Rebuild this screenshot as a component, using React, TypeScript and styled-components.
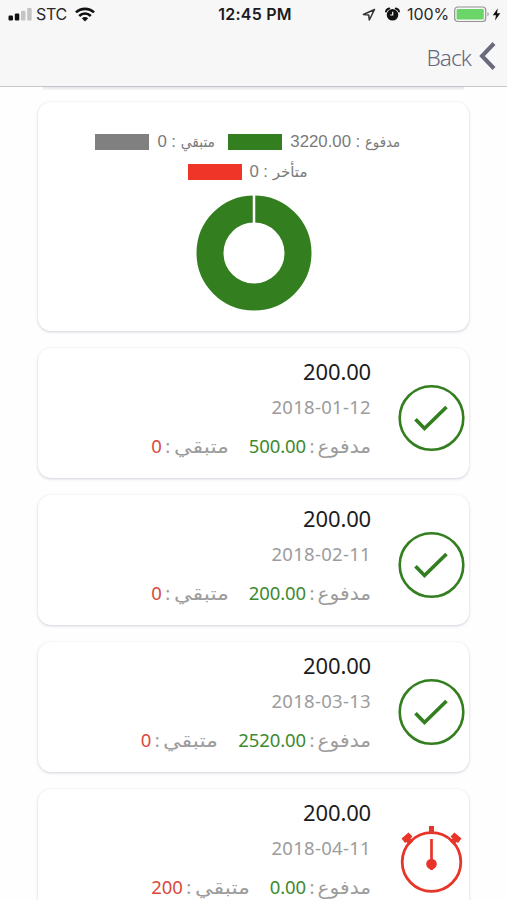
import React from "react";
import styled, { createGlobalStyle } from "styled-components";

const GREEN = "#337f20";
const RED = "#e8352a";

const GlobalStyle = createGlobalStyle`
  html, body { margin: 0; padding: 0; background: #fff; overflow: hidden; }
  * { box-sizing: border-box; }
`;

const Screen = styled.div`
  width: 507px;
  height: 900px;
  overflow: hidden;
  background: #fefefe;
  font-family: "Noto Sans", "DejaVu Sans", sans-serif;
`;

const Header = styled.header`
  height: 87px;
  background: #f7f7f8;
  border-bottom: 1px solid #c6c6cb;
`;

const StatusBar = styled.div`
  display: grid;
  grid-template-columns: 1fr auto 1fr;
  align-items: center;
  height: 29px;
  padding: 0 6px 0 8px;
  font: 400 16px/29px Inter, sans-serif;
  color: #2a2a2c;
`;

const StatusGroup = styled.div<{ $end?: boolean }>`
  display: flex;
  align-items: center;
  justify-content: ${(p) => (p.$end ? "flex-end" : "flex-start")};
  height: 29px;
`;

const Carrier = styled.span`
  margin: 0 8px 0 4px;
  font-size: 16px;
  letter-spacing: -0.35px;
`;

const Clock = styled.span`
  font-weight: 600;
  font-size: 16px;
  letter-spacing: 0.25px;
  padding-left: 1px;
  color: #1b1b1d;
`;

const Location = styled.span`
  display: flex;
  margin-right: 9px;
`;

const Percent = styled.span`
  margin: 0 5px 0 7px;
  font-size: 16px;
  letter-spacing: -0.1px;
`;

const NavBar = styled.nav`
  display: flex;
  justify-content: flex-end;
  align-items: center;
  gap: 8px;
  height: 57px;
  padding: 0 11px 4px 0;
  color: #66677a;
`;

const BackLabel = styled.span`
  font-size: 22.5px;
  font-weight: 350;
  line-height: 30px;
  letter-spacing: -0.9px;
  padding-top: 5px;
`;

const Content = styled.main`
  display: flex;
  flex-direction: column;
  gap: 17px;
  width: 431px;
  margin-left: 38px;
`;

const Card = styled.section<{ $h: number }>`
  flex: none;
  height: ${(p) => p.$h}px;
  border-radius: 13px;
  background: #fff;
  box-shadow: 0 1px 3px rgba(70, 70, 110, 0.24), 0 0 2px rgba(70, 70, 110, 0.04);
`;

const PreviousEdge = styled.div`
  height: 3px;
  margin: 0 5px -5px;
  background: linear-gradient(#e3e3e9, #f8f8fb);
`;

const ChartCard = styled(Card)`
  display: flex;
  flex-direction: column;
  align-items: center;
  padding-top: 25px;
`;

const LegendRow = styled.div`
  display: flex;
  gap: 13px;
  height: 30px;
  align-items: center;
  margin-left: -12px;
`;

const LegendItem = styled.div`
  display: flex;
  align-items: center;
  height: 30px;
  color: #7a7a7a;
  font: 400 16.8px/30px "Liberation Sans", sans-serif;
`;

const Swatch = styled.span<{ $color: string }>`
  width: 54px;
  height: 16px;
  margin-right: 8px;
  background: ${(p) => p.$color};
`;

const Colon = styled.span<{ $w: number }>`
  width: ${(p) => p.$w}px;
  text-align: center;
`;

const LegendWord = styled.span<{ $w: number; $sx: number }>`
  display: flex;
  justify-content: flex-end;
  width: ${(p) => p.$w}px;
  font: 400 15px/30px "DejaVu Sans", sans-serif;
  white-space: nowrap;
  transform: scaleX(${(p) => p.$sx});
  transform-origin: right center;
`;

const Donut = styled.svg`
  display: block;
  flex: none;
  margin-top: 7px;
`;

const PaymentCard = styled(Card)`
  display: flex;
  direction: rtl;
`;

const IconColumn = styled.div`
  display: flex;
  width: 98px;
  padding: 36px 4px 0 0;
`;

const Details = styled.div`
  display: flex;
  flex-direction: column;
  align-items: flex-start;
`;

const Total = styled.div`
  margin-top: 7px;
  font-size: 22px;
  line-height: 32px;
  letter-spacing: -0.15px;
  color: #1c1c1e;
`;

const DateText = styled.div`
  direction: ltr;
  margin-top: 5px;
  font-size: 18.5px;
  line-height: 30px;
  letter-spacing: 0.3px;
  color: #9c9c9c;
`;

const Amounts = styled.div`
  display: flex;
  gap: 20px;
  height: 30px;
  margin-top: 9px;
  font-size: 18.5px;
  line-height: 30px;
  color: #9c9c9c;
`;

const Amount = styled.div`
  display: flex;
`;

const Word = styled.span<{ $w: number; $sx: number }>`
  display: flex;
  width: ${(p) => p.$w}px;
  font: 400 19px/30px "DejaVu Sans", sans-serif;
  white-space: nowrap;
  transform: scaleX(${(p) => p.$sx});
  transform-origin: right center;
`;

const Value = styled.span<{ $color: string }>`
  color: ${(p) => p.$color};
  letter-spacing: -0.1px;
`;

const SignalIcon = () => (
  <svg width="24" height="15" viewBox="0 0 24 15">
    <rect x="0.5" y="8.5" width="4.5" height="5" rx="1.2" fill="#111" />
    <rect x="6.8" y="6.5" width="4.5" height="7" rx="1.2" fill="#111" />
    <rect x="13" y="3.8" width="4.5" height="9.7" rx="1.2" fill="#c4c4c6" />
    <rect x="19.2" y="1" width="4.5" height="12.5" rx="1.2" fill="#c4c4c6" />
  </svg>
);

const WifiIcon = () => (
  <svg width="20" height="15" viewBox="0 0 20 15" fill="none" stroke="#111" strokeWidth="2.7">
    <path d="M1 5.4C6 .6 14 .6 19 5.4" />
    <path d="M4.2 8.9C7.6 5.7 12.4 5.7 15.8 8.9" />
    <path d="M6.8 11.2Q10 8.6 13.2 11.2L10 14.5Z" fill="#111" stroke="none" />
  </svg>
);

const LocationIcon = () => (
  <svg width="14" height="14" viewBox="0 0 14 14" fill="none" stroke="#333" strokeWidth="1.5" strokeLinejoin="round">
    <path d="M12.5 1.5L1.4 6.5L6.7 7L7.3 12Z" />
  </svg>
);

const AlarmIcon = () => (
  <svg width="15" height="15" viewBox="0 0 15 15">
    <path d="M1 4.6Q1.5 1.8 4.3 1.5M14 4.6Q13.5 1.8 10.7 1.5" fill="none" stroke="#111" strokeWidth="1.9" strokeLinecap="round" />
    <circle cx="7.5" cy="7.8" r="5.8" fill="#111" />
    <path d="M7.7 4.8V8H5.2" fill="none" stroke="#f7f7f8" strokeWidth="1.2" />
  </svg>
);

const BatteryIcon = () => (
  <svg width="36" height="17" viewBox="0 0 36 17">
    <rect x="0.7" y="1" width="31" height="14.5" rx="3" fill="#f7f7f8" stroke="#929294" strokeWidth="1.2" />
    <rect x="2.6" y="3" width="27.2" height="10.5" rx="1" fill="#6bd568" />
    <path d="M33.5 6Q36 8.2 33.5 10.5Z" fill="#929294" />
  </svg>
);

const BoltIcon = () => (
  <svg width="11" height="13" viewBox="-2 0 11 13">
    <path d="M5.8 .3L.8 7.2H4L3 12.5L8.3 5.2H5Z" fill="#111" />
  </svg>
);

const BackIcon = () => (
  <svg width="17" height="28" viewBox="0 0 17 28">
    <path d="M15 1.5L3 14L15 26.5" fill="none" stroke="#696a7d" strokeWidth="4" />
  </svg>
);

const CheckIcon = () => (
  <svg width="68" height="68" viewBox="0 0 68 68" fill="none" stroke={GREEN}>
    <circle cx="34.5" cy="34" r="31.8" strokeWidth="2.6" />
    <path d="M18.5 35.2L27.5 44.5L49.5 23" strokeWidth="3.7" />
  </svg>
);

const StopwatchIcon = () => (
  <svg width="68" height="68" viewBox="0 0 68 68" fill="none" stroke={RED}>
    <circle cx="34.5" cy="37" r="29.3" strokeWidth="2.8" />
    <rect x="32" y="1" width="5" height="7" fill={RED} stroke="none" />
    <g fill={RED} stroke="none">
      <path d="M4.5 13.500L11.500 7.500L15.500 11.500L13.500 13.500L16 16.500L12 20L9.500 17L8 18Z" />
      <path d="M64.5 13.500L57.500 7.500L53.500 11.500L55.500 13.500L53 16.500L57 20L59.500 17L61 18Z" />
    </g>
    <path d="M34.5 14V45" strokeWidth="2.7" />
    <circle cx="34.5" cy="39" r="5.3" fill={RED} stroke="none" />
  </svg>
);

interface Payment {
  total: string;
  date: string;
  paid: string;
  remaining: string;
  late?: boolean;
}

const payments: Payment[] = [
  { total: "200.00", date: "2018-01-12", paid: "500.00", remaining: "0" },
  { total: "200.00", date: "2018-02-11", paid: "200.00", remaining: "0" },
  { total: "200.00", date: "2018-03-13", paid: "2520.00", remaining: "0" },
  { total: "200.00", date: "2018-04-11", paid: "0.00", remaining: "200", late: true },
];

const Legend = ({ color, value, word, w, sx = 1 }: { color: string; value: string; word: string; w: number; sx?: number }) => (
  <LegendItem>
    <Swatch $color={color} />
    <span>{value}</span>
    <Colon $w={13.5}>:</Colon>
    <LegendWord $w={w} $sx={sx}>{word}</LegendWord>
  </LegendItem>
);

const PaymentRow = ({ item }: { item: Payment }) => (
  <PaymentCard $h={130}>
    <IconColumn>{item.late ? <StopwatchIcon /> : <CheckIcon />}</IconColumn>
    <Details>
      <Total>{item.total}</Total>
      <DateText>{item.date}</DateText>
      <Amounts>
        <Amount>
          <Word $w={53} $sx={1.06}>مدفوع</Word>
          <Colon $w={12}>:</Colon>
          <Value $color="#3d8a2e">{item.paid}</Value>
        </Amount>
        <Amount>
          <Word $w={55} $sx={1.17}>متبقي</Word>
          <Colon $w={12}>:</Colon>
          <Value $color="#d94a3e">{item.remaining}</Value>
        </Amount>
      </Amounts>
    </Details>
  </PaymentCard>
);

export default function App() {
  return (
    <Screen>
      <GlobalStyle />
      <Header>
        <StatusBar>
          <StatusGroup>
            <SignalIcon />
            <Carrier>STC</Carrier>
            <WifiIcon />
          </StatusGroup>
          <Clock>12:45 PM</Clock>
          <StatusGroup $end>
            <Location>
              <LocationIcon />
            </Location>
            <AlarmIcon />
            <Percent>100%</Percent>
            <BatteryIcon />
            <BoltIcon />
          </StatusGroup>
        </StatusBar>
        <NavBar>
          <BackLabel>Back</BackLabel>
          <BackIcon />
        </NavBar>
      </Header>
      <Content>
        <PreviousEdge />
        <ChartCard $h={229}>
          <LegendRow>
            <Legend color="#808080" value="0" word="متبقي" w={35} sx={0.92} />
            <Legend color={GREEN} value="3220.00" word="مدفوع" w={35} sx={0.88} />
          </LegendRow>
          <LegendRow>
            <Legend color="#ee3528" value="0" word="متأخر" w={35} />
          </LegendRow>
          <Donut width="118" height="118" viewBox="0 0 118 118">
            <circle cx="59" cy="59" r="44" fill="none" stroke={GREEN} strokeWidth="27" />
            <path d="M59 0V33" stroke="#fff" strokeWidth="2.5" />
          </Donut>
        </ChartCard>
        {payments.map((item) => (
          <PaymentRow key={item.date} item={item} />
        ))}
      </Content>
    </Screen>
  );
}
